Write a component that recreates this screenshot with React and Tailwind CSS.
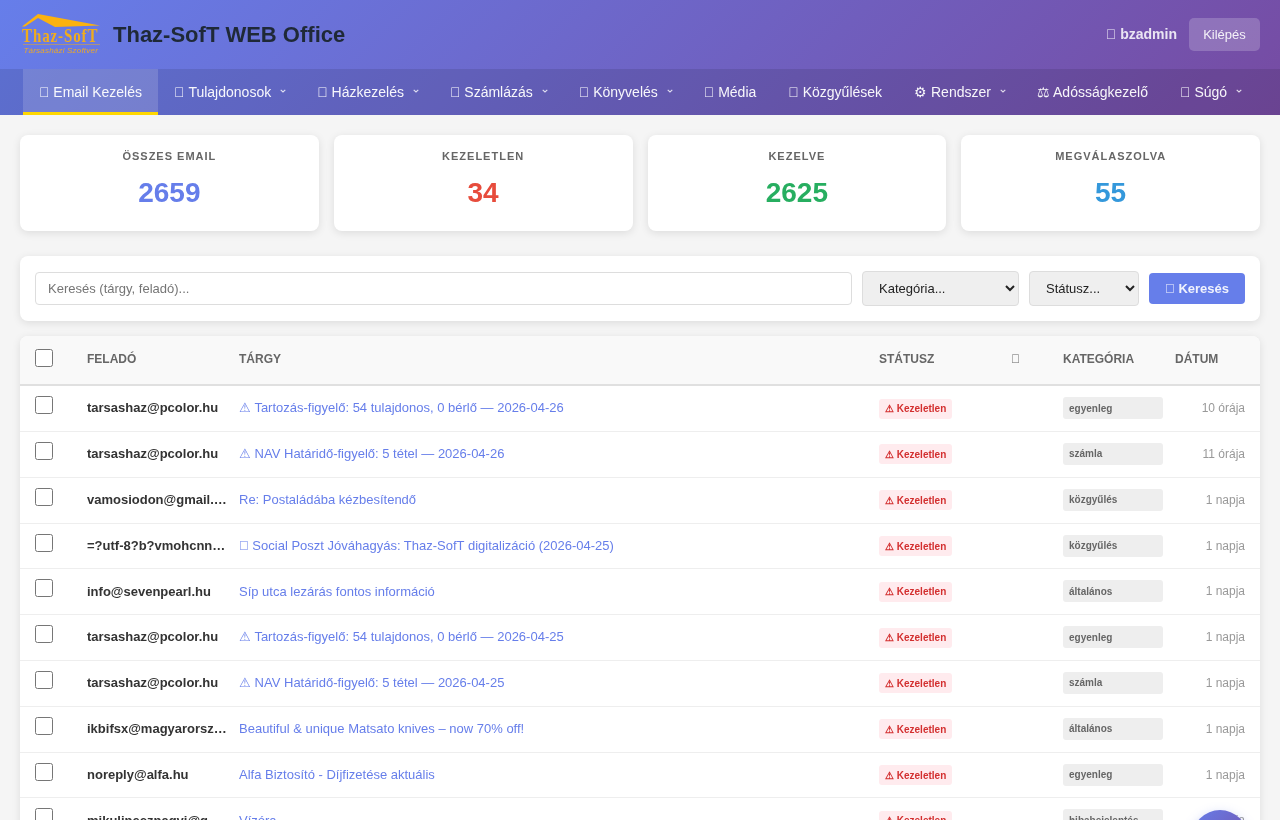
import React from "react";

const font = "font-['Liberation_Sans',Arial,sans-serif]";
const TOFU = "\uE000";

const navItems = [
  { icon: TOFU, label: "Email Kezelés", active: true },
  { icon: TOFU, label: "Tulajdonosok", caret: true },
  { icon: TOFU, label: "Házkezelés", caret: true },
  { icon: TOFU, label: "Számlázás", caret: true },
  { icon: TOFU, label: "Könyvelés", caret: true },
  { icon: TOFU, label: "Média" },
  { icon: TOFU, label: "Közgyűlések" },
  { icon: "⚙", label: "Rendszer", caret: true },
  { icon: "⚖", label: "Adósságkezelő" },
  { icon: TOFU, label: "Súgó", caret: true },
];

const stats = [
  { label: "Összes email", value: "2659", color: "text-[#667eea]" },
  { label: "Kezeletlen", value: "34", color: "text-[#e74c3c]" },
  { label: "Kezelve", value: "2625", color: "text-[#27ae60]" },
  { label: "Megválaszolva", value: "55", color: "text-[#3498db]" },
];

const rows = [
  ["tarsashaz@pcolor.hu", "⚠ Tartozás-figyelő: 54 tulajdonos, 0 bérlő — 2026-04-26", "egyenleg", "10 órája"],
  ["tarsashaz@pcolor.hu", "⚠ NAV Határidő-figyelő: 5 tétel — 2026-04-26", "számla", "11 órája"],
  ["vamosiodon@gmail.com", "Re: Postaládába kézbesítendő", "közgyűlés", "1 napja"],
  ["=?utf-8?b?vmohcnnvbg==", `${TOFU} Social Poszt Jóváhagyás: Thaz-SofT digitalizáció (2026-04-25)`, "közgyűlés", "1 napja"],
  ["info@sevenpearl.hu", "Síp utca lezárás fontos információ", "általános", "1 napja"],
  ["tarsashaz@pcolor.hu", "⚠ Tartozás-figyelő: 54 tulajdonos, 0 bérlő — 2026-04-25", "egyenleg", "1 napja"],
  ["tarsashaz@pcolor.hu", "⚠ NAV Határidő-figyelő: 5 tétel — 2026-04-25", "számla", "1 napja"],
  ["ikbifsx@magyarorszag.hu", "Beautiful & unique Matsato knives – now 70% off!", "általános", "1 napja"],
  ["noreply@alfa.hu", "Alfa Biztosító - Díjfizetése aktuális", "egyenleg", "1 napja"],
  ["mikulineсznagyi@gmail.com", "Vízóra", "hibabejelentés", "1 napja"],
];

function Logo() {
  return (
    <svg width="80" height="44" viewBox="0 0 80 44" className="shrink-0">
      <polygon points="0,13.5 16,1 78,12.5 33,14 16,5 3,13.5" fill="#fbb20f" />
      <text transform="translate(0 29) scale(1 1.25)" fill="#f0ac1c" fontFamily="'Liberation Serif',serif" fontWeight="700" fontSize="15" letterSpacing="0.9">Thaz-SofT</text>
      <rect x="1" y="31" width="77" height="0.7" fill="#f0ac1c" opacity="0.7" />
      <text x="1.5" y="40" fill="#eaa82a" fontFamily="'Liberation Sans',sans-serif" fontStyle="italic" fontSize="8" letterSpacing="0.2">Társasházi Szoftver</text>
    </svg>
  );
}

function Caret() {
  return (
    <svg width="6" height="4" viewBox="0 0 6 4" className="ml-[9px] mb-[2px] inline-block opacity-80">
      <path d="M0.7 0.8 L3 3 L5.3 0.8" fill="none" stroke="#fff" strokeWidth="1.1" />
    </svg>
  );
}

function Th({ className = "", children }) {
  return (
    <th className={`px-3 pb-[3px] text-left text-[12px] font-bold uppercase text-[#666] align-middle ${className}`}>
      {children}
    </th>
  );
}

export default function App() {
  return (
    <div className={`${font} h-[820px] overflow-hidden bg-[#f5f5f5] text-[#333] will-change-transform`}>
      <div className="bg-[linear-gradient(135deg,#667eea_0%,#764ba2_100%)]">
        <header className="flex h-[69px] items-center justify-between px-5">
          <div className="flex items-center gap-[11px] pl-[2px] pt-[1px]">
            <Logo />
            <h1 className="text-[22px] font-bold leading-none text-[#1f2937]">Thaz-SofT WEB Office</h1>
          </div>
          <div className="flex items-center gap-3">
            <span className="text-[14px] font-bold text-white/85">{TOFU} bzadmin</span>
            <button className="h-[33px] w-[71px] rounded-[5px] bg-white/20 text-[13px] text-white/90">Kilépés</button>
          </div>
        </header>
        <nav className="flex h-[46px] justify-center bg-black/10">
          {navItems.map((item) => (
            <a
              key={item.label}
              className={`flex items-center whitespace-nowrap border-b-[3px] px-4 pt-[3px] text-[14px] text-white/95 ${
                item.active ? "border-[#ffd700] bg-white/15" : "border-transparent"
              } ${item.caret ? "pr-[15px]" : ""}`}
            >
              <span>{item.icon} {item.label}</span>
              {item.caret && <Caret />}
            </a>
          ))}
        </nav>
      </div>

      <main className="px-5 pt-5">
        <section className="grid grid-cols-4 gap-[15px]">
          {stats.map((s) => (
            <div key={s.label} className="flex h-[96px] flex-col items-center rounded-lg bg-white pt-[15px] shadow-[0_2px_8px_rgba(0,0,0,0.1)]">
              <div className="text-[11px] font-bold uppercase leading-[13px] tracking-[1px] text-[#666]">{s.label}</div>
              <div className={`mt-[14px] text-[28px] font-bold leading-[32px] ${s.color}`}>{s.value}</div>
            </div>
          ))}
        </section>

        <section className="mt-[25px] flex h-[65px] items-center gap-[10px] rounded-lg bg-white px-[15px] shadow-[0_2px_8px_rgba(0,0,0,0.1)]">
          <input
            placeholder="Keresés (tárgy, feladó)..."
            className="h-[33px] min-w-0 flex-1 rounded border border-[#ddd] px-3 text-[13px] text-[#333] placeholder:text-[#757575]"
          />
          <select className="h-[35px] w-[157px] appearance-auto rounded border border-[#ddd] bg-[#efefef] pl-3 text-[13px] text-[#222]">
            <option>Kategória...</option>
          </select>
          <select className="h-[35px] w-[110px] appearance-auto rounded border border-[#ddd] bg-[#efefef] pl-3 text-[13px] text-[#222]">
            <option>Státusz...</option>
          </select>
          <button className="h-[31px] w-[96px] rounded bg-[#667eea] text-[13px] font-bold text-white/90">{TOFU} Keresés</button>
        </section>

        <section className="mt-[15px] overflow-hidden rounded-lg bg-white shadow-[0_2px_8px_rgba(0,0,0,0.1)]">
          <table className="w-full table-fixed border-collapse">
            <colgroup>
              <col className="w-[55px]" />
              <col className="w-[152px]" />
              <col className="w-[640px]" />
              <col className="w-[132px]" />
              <col className="w-[52px]" />
              <col className="w-[112px]" />
              <col className="w-[97px]" />
            </colgroup>
            <thead>
              <tr className="h-[49px] border-b-2 border-[#e0e0e0] bg-[#f9f9f9]">
                <th className="pb-[5px] pl-[15px] text-left align-middle">
                  <input type="checkbox" className="block size-[18px] appearance-auto" />
                </th>
                <Th>Feladó</Th>
                <Th>Tárgy</Th>
                <Th>Státusz</Th>
                <Th className="font-normal">{TOFU}</Th>
                <Th>Kategória</Th>
                <Th>Dátum</Th>
              </tr>
            </thead>
            <tbody>
              {rows.map((r, i) => (
                <tr key={i} className={`border-b border-[#eee] ${i === 0 ? "h-[46.6px]" : "h-[45.8px]"}`}>
                  <td className="pb-[7px] pl-[15px] align-middle">
                    <input type="checkbox" className="block size-[18px] appearance-auto" />
                  </td>
                  <td className="pb-[1px] pl-3 align-middle">
                    <div className="w-[140px] truncate text-[13px] font-bold text-[#333]">{r[0]}</div>
                  </td>
                  <td className="px-3 pb-[1px] align-middle">
                    <div className="truncate text-[13px] text-[#667eea]">{r[1]}</div>
                  </td>
                  <td className="px-3 pb-[3px] align-middle">
                    <span className="inline-flex h-[20px] items-center rounded-[3px] bg-[#ffebee] px-[6px] text-[10px] font-bold text-[#d32f2f]">⚠ Kezeletlen</span>
                  </td>
                  <td className="align-middle" />
                  <td className="px-3 pb-[1px] align-middle">
                    <div className="flex h-[22px] w-[100px] items-center rounded-[3px] bg-[#eeeeee] px-[6px] text-[10px] font-bold text-[#666]">{r[2]}</div>
                  </td>
                  <td className="pb-[1px] pr-[15px] text-right align-middle text-[12px] text-[#999]">{r[3]}</td>
                </tr>
              ))}
            </tbody>
          </table>
        </section>
      </main>

      <div className="fixed left-[1192px] top-[810px] size-[56px] rounded-full bg-[linear-gradient(135deg,#667eea,#764ba2)] shadow-[0_4px_12px_rgba(102,126,234,0.4)]" />
    </div>
  );
}
